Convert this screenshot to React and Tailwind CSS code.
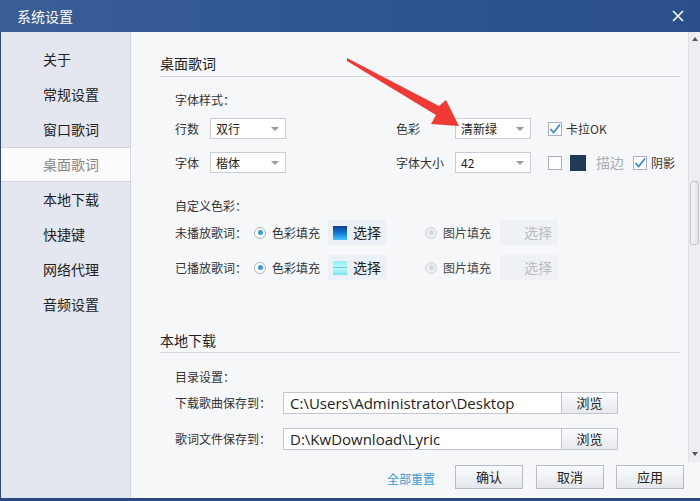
const font = { fontFamily: '"Noto Sans CJK SC", "Noto Sans", sans-serif' };

const navItems = ['关于', '常规设置', '窗口歌词', '桌面歌词', '本地下载', '快捷键', '网络代理', '音频设置'];

function Select({ value, width = 'w-[76px]' }) {
    return (
        <div className={`${width} h-[21px] bg-white border border-[#c9cdd4] flex items-center pl-[5px] pr-[6px] text-[12px] text-[#222]`}>
            <span className="flex-1">{value}</span>
            <span className="w-0 h-0 border-l-[4px] border-r-[4px] border-t-[4px] border-l-transparent border-r-transparent border-t-[#9a9a9a]"></span>
        </div>
    );
}

function Check({ checked }) {
    return (
        <div className="w-[14px] h-[14px] bg-white border border-[#a9b0b9] flex items-center justify-center">
            {checked && (
                <svg width="12" height="12" viewBox="0 0 12 12">
                    <path d="M1.5 6 L4.5 9.5 L11 1.5" fill="none" stroke="#3b8fd1" strokeWidth="1.8" />
                </svg>
            )}
        </div>
    );
}

function Radio({ on }) {
    return (
        <div className={`w-[12px] h-[12px] rounded-full border ${on ? 'border-[#a9b4c0] bg-white' : 'border-[#cfd4da] bg-[#eef0f2]'} flex items-center justify-center`}>
            <div className={`w-[5px] h-[5px] rounded-full ${on ? 'bg-[#3a9bd6]' : 'bg-[#d4d8dc]'}`}></div>
        </div>
    );
}

function FillRow({ label, swatch }) {
    return (
        <div className="flex items-center h-[25px] text-[12px] text-[#333]">
            <span className="w-[79px]">{label}</span>
            <Radio on />
            <span className="ml-[6px] w-[56px]">色彩填充</span>
            <div className="w-[58px] h-[25px] bg-[#ecf1f7] flex items-center pl-[5px]">
                {swatch}
                <span className="ml-[6px] text-[14px] text-[#222]">选择</span>
            </div>
            <div className="w-[39px]"></div>
            <Radio />
            <span className="ml-[6px] w-[57px] text-[#444]">图片填充</span>
            <div className="w-[58px] h-[25px] bg-[#eef1f5] flex items-center justify-end pr-[6px] text-[14px] text-[#b9bec5]">选择</div>
        </div>
    );
}

function PathRow({ label, value }) {
    return (
        <div className="flex items-center h-[22px]">
            <span className="w-[108px] text-[12px] text-[#333]">{label}</span>
            <div className="w-[279px] h-[22px] bg-white border border-[#c2c7ce] flex items-center pl-[6px] text-[15px] text-[#222]" style={{ fontFamily: '"Open Sans", "Noto Sans", sans-serif' }}>
                {value}
            </div>
            <div className="w-[56px] h-[22px] border border-l-0 border-[#c2c7ce] bg-gradient-to-b from-[#fafbfc] to-[#e6e9ee] flex items-center justify-center text-[13px] text-[#222]">浏览</div>
        </div>
    );
}

function Btn({ children }) {
    return (
        <div className="w-[68px] h-[24px] border border-[#b5bcc6] bg-gradient-to-b from-[#fbfcfd] to-[#e3e7ec] flex items-center justify-center text-[13px] text-[#222]">
            {children}
        </div>
    );
}

export default function App() {
    return (
        <div className="relative w-[700px] h-[501px] overflow-hidden bg-[#2c4a80] select-none" style={font}>
            {/* title bar */}
            <div className="h-[32px] flex items-center justify-between pl-[17px] pr-[16px] bg-gradient-to-r from-[#3a5e96] via-[#2f5690] to-[#2a4f8c]">
                <span className="text-[14px] text-white">系统设置</span>
                <svg width="12" height="12" viewBox="0 0 12 12">
                    <path d="M1 1 L11 11 M11 1 L1 11" stroke="#fff" strokeWidth="1.6" />
                </svg>
            </div>

            <div className="flex h-[466px] ml-[1px]">
                {/* sidebar */}
                <div className="w-[130px] bg-[#e4e7f0] border-r border-[#d3d7df] pt-[10px]">
                    {navItems.map((item) => (
                        <div
                            key={item}
                            className={`h-[35px] flex items-center pl-[42px] text-[14px] ${item === '桌面歌词' ? 'bg-[#fbfbfc] text-[#888] border-y border-[#d0d4dc]' : 'text-[#222]'}`}
                        >
                            {item}
                        </div>
                    ))}
                </div>

                {/* content */}
                <div className="flex-1 flex flex-col bg-[#f6f7f9]">
                    <div className="flex h-[430px]">
                        <div className="flex-1 overflow-hidden pl-[29px] pr-[8px]">
                            <div className="mt-[22px] pb-[4px] border-b border-[#d5d8dd] text-[14px] leading-[18px] text-[#222]">桌面歌词</div>

                            <div className="pl-[15px]">
                                <div className="mt-[15px] h-[16px] text-[12px] leading-[16px] text-[#333]">字体样式：</div>

                                <div className="mt-[10px] flex items-center h-[21px] text-[12px] text-[#333]">
                                    <span className="w-[35px]">行数</span>
                                    <Select value="双行" />
                                    <span className="ml-[110px] w-[59px]">色彩</span>
                                    <Select value="清新绿" />
                                    <div className="ml-[17px]"><Check checked /></div>
                                    <span className="ml-[4px]">卡拉OK</span>
                                </div>

                                <div className="mt-[13px] flex items-center h-[21px] text-[12px] text-[#333]">
                                    <span className="w-[35px]">字体</span>
                                    <Select value="楷体" />
                                    <span className="ml-[110px] w-[59px]">字体大小</span>
                                    <Select value="42" />
                                    <div className="ml-[17px]"><Check /></div>
                                    <div className="ml-[8px] w-[16px] h-[16px] bg-[#213a57]"></div>
                                    <span className="ml-[10px] text-[14px] text-[#a9afb6]">描边</span>
                                    <div className="ml-[9px]"><Check checked /></div>
                                    <span className="ml-[4px]">阴影</span>
                                </div>

                                <div className="mt-[25px] h-[16px] text-[12px] leading-[16px] text-[#333]">自定义色彩：</div>

                                <div className="mt-[6px]">
                                    <FillRow
                                        label="未播放歌词："
                                        swatch={<div className="w-[14px] h-[14px] bg-gradient-to-b from-[#0c3f96] via-[#1577d6] to-[#45c4ff]"></div>}
                                    />
                                </div>
                                <div className="mt-[10px]">
                                    <FillRow
                                        label="已播放歌词："
                                        swatch={<div className="w-[14px] h-[14px] bg-gradient-to-b from-[#8ef1f6] via-[#c4f8fb] to-[#6fe6f0] flex items-center"><div className="w-full h-px bg-[#5bcfe0]"></div></div>}
                                    />
                                </div>
                            </div>

                            <div className="mt-[51px] pb-[3px] border-b border-[#d5d8dd] text-[14px] leading-[18px] text-[#222]">本地下载</div>

                            <div className="pl-[15px]">
                                <div className="mt-[16px] h-[16px] text-[12px] leading-[16px] text-[#333]">目录设置：</div>
                                <div className="mt-[7px]">
                                    <PathRow label="下载歌曲保存到：" value="C:\Users\Administrator\Desktop" />
                                </div>
                                <div className="mt-[14px]">
                                    <PathRow label="歌词文件保存到：" value="D:\KwDownload\Lyric" />
                                </div>
                            </div>
                        </div>

                        {/* scrollbar */}
                        <div className="w-[12px] bg-[#eceef2] border-l border-[#dde0e5] flex flex-col items-center">
                            <div className="h-[12px] flex items-center justify-center mt-[1px]">
                                <span className="w-0 h-0 border-l-[3px] border-r-[3px] border-b-[4px] border-l-transparent border-r-transparent border-b-[#555]"></span>
                            </div>
                            <div className="mt-[136px] w-[9px] h-[64px] rounded-[3px] border border-[#bfc4cb] bg-gradient-to-r from-[#f4f5f7] to-[#e2e5e9]"></div>
                            <div className="flex-1"></div>
                            <div className="h-[12px] flex items-center justify-center mb-[2px]">
                                <span className="w-0 h-0 border-l-[3px] border-r-[3px] border-t-[4px] border-l-transparent border-r-transparent border-t-[#555]"></span>
                            </div>
                        </div>
                    </div>

                    {/* footer */}
                    <div className="flex-1 flex items-start justify-end pt-[3px] pr-[16px]">
                        <span className="mt-[5px] mr-[20px] text-[12px] text-[#3a9bd6]">全部重置</span>
                        <Btn>确认</Btn>
                        <div className="ml-[13px]"><Btn>取消</Btn></div>
                        <div className="ml-[12px]"><Btn>应用</Btn></div>
                    </div>
                </div>
            </div>

            {/* red annotation arrow */}
            <svg className="absolute left-0 top-0 pointer-events-none" width="700" height="501">
                <polygon points="347,58 439,106 446,100 459,126 431,124 436,115 347,61" fill="#ef3a35" />
            </svg>
        </div>
    );
}
